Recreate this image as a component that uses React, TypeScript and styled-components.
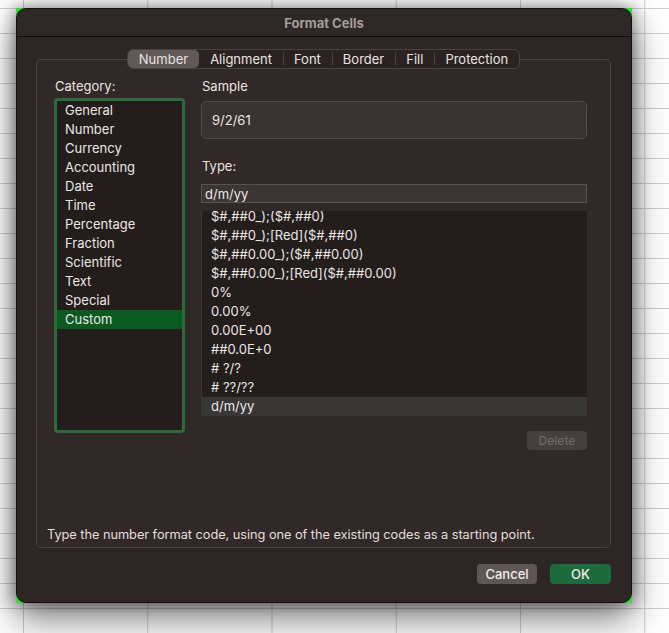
import styled, { createGlobalStyle } from "styled-components"

const categories = [
    "General",
    "Number",
    "Currency",
    "Accounting",
    "Date",
    "Time",
    "Percentage",
    "Fraction",
    "Scientific",
    "Text",
    "Special",
    "Custom",
]

const formats = [
    "$#,##0_);($#,##0)",
    "$#,##0_);[Red]($#,##0)",
    "$#,##0.00_);($#,##0.00)",
    "$#,##0.00_);[Red]($#,##0.00)",
    "0%",
    "0.00%",
    "0.00E+00",
    "##0.0E+0",
    "# ?/?",
    "# ??/??",
    "d/m/yy",
]

const tabs = ["Number", "Alignment", "Font", "Border", "Fill", "Protection"]

const GlobalStyle = createGlobalStyle`
    html, body {
        margin: 0;
        padding: 0;
        min-height: 633px;
        font-family: Inter, "Liberation Sans", Arial, sans-serif;
        background-color: #ffffff;
        background-image:
            linear-gradient(to right, #cfcfcf 1px, transparent 1px),
            linear-gradient(to bottom, #cfcfcf 1px, transparent 1px);
        background-size: 124.25px 100%, 100% 25px;
        background-position: 23px 0, 0 8px;
    }
`

function App() {
    const selectedCategory = "Custom"
    const selectedFormat = "d/m/yy"

    return (
        <>
            <GlobalStyle />
            <Page>
                <Frame>
                    <Dialog>
                        <TitleBar>Format Cells</TitleBar>
                        <Body>
                            <TabBar>
                                {tabs.map((tab, i) => (
                                    <Tab
                                        key={tab}
                                        $active={i === 0}
                                        $divider={i > 1}
                                    >
                                        {tab}
                                    </Tab>
                                ))}
                            </TabBar>
                            <GroupBox>
                                <Columns>
                                    <LeftColumn>
                                        <Label>Category:</Label>
                                        <CategoryList>
                                            {categories.map((c) => (
                                                <CategoryItem
                                                    key={c}
                                                    $selected={c === selectedCategory}
                                                >
                                                    {c}
                                                </CategoryItem>
                                            ))}
                                        </CategoryList>
                                    </LeftColumn>
                                    <RightColumn>
                                        <Label>Sample</Label>
                                        <SampleBox>9/2/61</SampleBox>
                                        <TypeLabel>Type:</TypeLabel>
                                        <TypeInput>d/m/yy</TypeInput>
                                        <FormatList>
                                            <FormatScroll>
                                                {formats.map((f) => (
                                                    <FormatItem
                                                        key={f}
                                                        $selected={f === selectedFormat}
                                                    >
                                                        {f}
                                                    </FormatItem>
                                                ))}
                                            </FormatScroll>
                                        </FormatList>
                                        <DeleteButton disabled>Delete</DeleteButton>
                                    </RightColumn>
                                </Columns>
                                <HelpText>
                                    Type the number format code, using one of the
                                    existing codes as a starting point.
                                </HelpText>
                            </GroupBox>
                            <Footer>
                                <Button $variant="secondary">Cancel</Button>
                                <Button $variant="primary">OK</Button>
                            </Footer>
                        </Body>
                    </Dialog>
                </Frame>
            </Page>
        </>
    )
}

export default App

const Page = styled.div`
    padding: 8px 0 0 16px;
`

// green window backing that peeks out at the rounded corners
const Frame = styled.div`
    width: 616px;
    background: #3bd43c;
    box-shadow: 0 16px 34px rgba(0, 0, 0, 0.5), 4px 0 14px rgba(0, 0, 0, 0.25),
        -4px 0 14px rgba(0, 0, 0, 0.25);
`

const Dialog = styled.div`
    box-sizing: border-box;
    width: 616px;
    height: 595px;
    background: #2d2624;
    border: 1px solid #121010;
    border-radius: 10px;
    overflow: hidden;
    display: flex;
    flex-direction: column;
`

const TitleBar = styled.div`
    height: 27px;
    flex-shrink: 0;
    display: flex;
    justify-content: center;
    align-items: center;
    background: #2e2826;
    border-bottom: 1px solid #0f0c0b;
    color: #a59d9b;
    font-size: 13px;
    font-weight: 700;
`

const Body = styled.div`
    padding: 12px 20px 0 19px;
    display: flex;
    flex-direction: column;
`

const TabBar = styled.div`
    position: relative;
    z-index: 1;
    align-self: center;
    box-sizing: border-box;
    height: 20px;
    margin-bottom: -10px;
    display: flex;
    align-items: stretch;
    background: #2a2321;
    border: 1px solid #4a4341;
    border-radius: 6px;
`

const Tab = styled.div<{ $active?: boolean; $divider?: boolean }>`
    position: relative;
    display: flex;
    align-items: center;
    padding: 0 11px;
    font-size: 13px;
    color: #e8e3e2;
    border-radius: 5px;
    background: ${({ $active }) => ($active ? "#625a58" : "transparent")};

    &::before {
        content: "";
        display: ${({ $divider }) => ($divider ? "block" : "none")};
        position: absolute;
        left: 0;
        top: 3px;
        bottom: 3px;
        width: 1px;
        background: #4a4341;
    }
`

const GroupBox = styled.div`
    box-sizing: border-box;
    height: 489px;
    padding: 19px 23px 4px 10px;
    display: flex;
    flex-direction: column;
    background: #312927;
    border: 1px solid #4a4341;
    border-radius: 5px;
`

const Columns = styled.div`
    display: flex;
    gap: 16px;
    padding-left: 7px;
`

const LeftColumn = styled.div`
    width: 131px;
    display: flex;
    flex-direction: column;
`

const RightColumn = styled.div`
    flex: 1;
    display: flex;
    flex-direction: column;
`

const Label = styled.div`
    height: 16px;
    line-height: 14px;
    padding-left: 1px;
    font-size: 13px;
    color: #e8e3e2;
`

const TypeLabel = styled(Label)`
    margin-top: 20px;
`

const CategoryList = styled.div`
    box-sizing: border-box;
    height: 335px;
    margin-top: 3px;
    background: #231d1c;
    border: 3px solid #2d6a3e;
    border-radius: 4px;
`

const CategoryItem = styled.div<{ $selected?: boolean }>`
    height: 19px;
    line-height: 19px;
    padding-left: 8px;
    font-size: 13px;
    color: #ebe7e6;
    background: ${({ $selected }) => ($selected ? "#0a5a21" : "transparent")};
`

const SampleBox = styled.div`
    box-sizing: border-box;
    height: 38px;
    margin-top: 6px;
    padding-left: 10px;
    display: flex;
    align-items: center;
    background: #3a3230;
    border: 1px solid #544b49;
    border-radius: 5px;
    font-size: 13px;
    color: #ebe7e6;
`

const TypeInput = styled.div`
    box-sizing: border-box;
    height: 19px;
    margin-top: 9px;
    padding-left: 3px;
    display: flex;
    align-items: center;
    background: #3c3533;
    border: 1px solid #5a5250;
    font-size: 13px;
    color: #ebe7e6;
`

const FormatList = styled.div`
    height: 205px;
    margin-top: 8px;
    overflow: hidden;
    background: #231d1c;
    border-left: 1px solid #3a3432;
`

// list is scrolled so the first row sits slightly under the top edge
const FormatScroll = styled.div`
    margin-top: -4px;
`

const FormatItem = styled.div<{ $selected?: boolean }>`
    height: 19px;
    line-height: 19px;
    padding-left: 9px;
    font-size: 13px;
    color: #ebe7e6;
    background: ${({ $selected }) => ($selected ? "#393636" : "transparent")};
`

const DeleteButton = styled.button`
    align-self: flex-end;
    width: 60px;
    height: 19px;
    margin-top: 15px;
    padding: 0;
    border: none;
    border-radius: 4px;
    background: #463f3e;
    color: #6f6866;
    font-family: inherit;
    font-size: 12px;
    font-weight: 500;
`

const HelpText = styled.div`
    margin-top: auto;
    line-height: 16px;
    font-size: 12.8px;
    letter-spacing: -0.05px;
    color: #e2dedd;
`

const Footer = styled.div`
    display: flex;
    justify-content: flex-end;
    gap: 13px;
    margin-top: 16px;
`

const Button = styled.button<{ $variant: "primary" | "secondary" }>`
    width: ${({ $variant }) => ($variant === "primary" ? "61px" : "60px")};
    height: 20px;
    padding: 0;
    border: none;
    border-radius: 4px;
    background: ${({ $variant }) =>
        $variant === "primary" ? "#1c6b3b" : "#5f5756"};
    color: #f0ecec;
    font-family: inherit;
    font-size: 13px;
    font-weight: 500;
`
